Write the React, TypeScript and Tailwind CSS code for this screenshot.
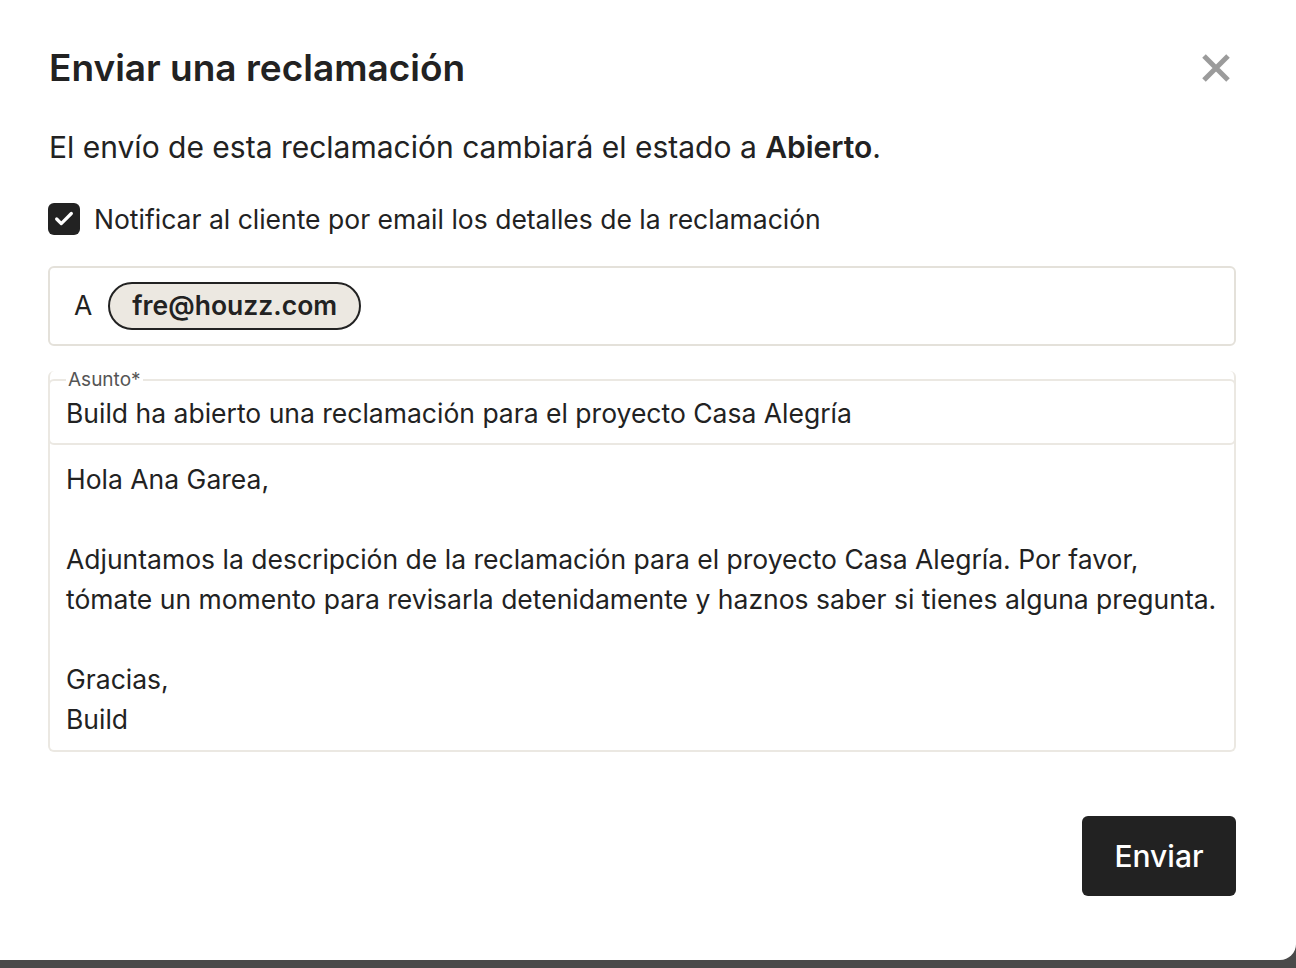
import { Check } from "lucide-react"

const font = { fontFamily: "Inter, 'Noto Sans', sans-serif" }

function CloseIcon() {
  return (
    <svg width="32" height="32" viewBox="0 0 32 32" className="text-[#9b9b9b]">
      <path d="M4 4 L28 28 M28 4 L4 28" stroke="currentColor" strokeWidth="5" strokeLinecap="butt" />
    </svg>
  )
}

export default function App() {
  return (
    <div className="min-h-[968px] bg-[#4a4a4a] text-[#222]" style={font}>
      <div className="h-[960px] bg-white rounded-br-[16px] pl-[48px] pr-[60px] pt-[44px]">
        <div className="flex items-start justify-between">
          <h1 className="text-[37px] font-semibold leading-[48px] pl-[1px]">Enviar una reclamación</h1>
          <button className="mt-[8px] mr-[4px]">
            <CloseIcon />
          </button>
        </div>

        <p className="mt-[35px] text-[30px] leading-[40px] pl-[1px]">
          El envío de esta reclamación cambiará el estado a <span className="font-semibold">Abierto</span>.
        </p>

        <label className="mt-[34px] flex items-center gap-[14px]">
          <span className="w-[32px] h-[32px] rounded-[6px] bg-[#222] flex items-center justify-center">
            <Check className="w-[22px] h-[22px] text-white" strokeWidth={3.5} />
          </span>
          <span className="text-[26.5px] leading-[36px]">
            Notificar al cliente por email los detalles de la reclamación
          </span>
        </label>

        <div className="mt-[29px] h-[80px] border-2 border-[#e4e1da] rounded-[6px] flex items-center pl-[24px] gap-[16px]">
          <span className="text-[26.5px]">A</span>
          <span className="h-[48px] px-[22px] rounded-full border-2 border-[#222] bg-[#ece8e1] flex items-center text-[26.5px] font-semibold">
            fre@houzz.com
          </span>
        </div>

        <div className="mt-[25px] border-2 border-t-0 border-[#ebe8e2] rounded-[6px]">
          <fieldset className="-mx-[2px] border-2 border-[#ebe8e2] rounded-[6px] px-[16px] pb-[12px]">
            <legend className="px-[2px] text-[19px] leading-[18px] text-[#555]">Asunto*</legend>
            <div className="text-[26.5px] leading-[36px] pt-[6px]">
              Build ha abierto una reclamación para el proyecto Casa Alegría
            </div>
          </fieldset>
          <div className="px-[16px] pt-[14px] pb-[11px] text-[26.5px] leading-[40px]">
            <p>Hola Ana Garea,</p>
            <p className="mt-[40px]">
              Adjuntamos la descripción de la reclamación para el proyecto Casa Alegría. Por favor,
              <br />
              tómate un momento para revisarla detenidamente y haznos saber si tienes alguna pregunta.
            </p>
            <p className="mt-[40px]">Gracias,</p>
            <p>Build</p>
          </div>
        </div>

        <div className="mt-[64px] flex justify-end">
          <button className="w-[154px] h-[80px] rounded-[6px] bg-[#222] text-white text-[30px] font-medium">
            Enviar
          </button>
        </div>
      </div>
    </div>
  )
}
